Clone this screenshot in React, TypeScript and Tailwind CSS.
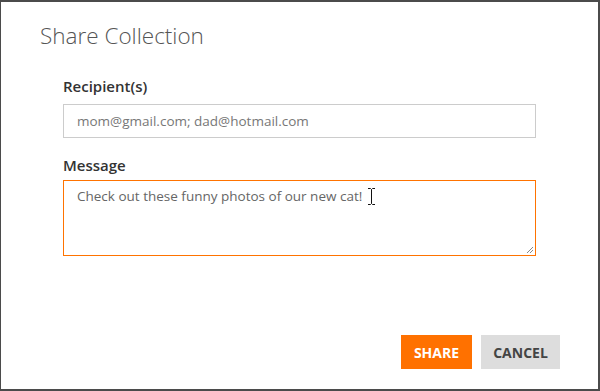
import React from "react";

const App = () => {
  return (
    <div className="h-[391px] w-[600px] overflow-hidden bg-[#3a3a3a] font-['Open_Sans',sans-serif]">
      <div className="flex h-full w-full flex-col border-t-2 border-r-2 border-b-2 border-l border-[#4b4b4b] bg-white">
        <h2 className="pl-[39px] pt-[19px] text-[22.5px] font-light leading-[30px] text-[#555]">
          Share Collection
        </h2>
        <div className="flex flex-col px-[62px] pt-[23px]">
          <label className="text-[15px] font-semibold leading-[24px] text-[#333]">
            Recipient(s)
          </label>
          <div className="mt-[6px] flex h-[34px] items-center border border-[#cccccc] px-[13px] text-[13.5px] text-[#777]">
            mom@gmail.com; dad@hotmail.com
          </div>
          <label className="mt-[15px] text-[15px] font-semibold leading-[24px] text-[#333]">
            Message
          </label>
          <div className="relative mt-[3px] h-[76px] border border-[#ff7300] px-[13px] pt-[5px] text-[13.5px] text-[#666]">
            <span>Check out these funny photos of our new cat!</span>
            <svg
              className="absolute left-[303px] top-[7px]"
              width="9"
              height="17"
              viewBox="0 0 9 17"
            >
              <path
                d="M1 0.5H3.5L4.5 1.5L5.5 0.5H8M4.5 1.5V15.5M1 16.5H3.5L4.5 15.5L5.5 16.5H8"
                stroke="#111"
                strokeWidth="1"
                fill="none"
              />
            </svg>
            <svg
              className="absolute bottom-[1px] right-[1px]"
              width="8"
              height="8"
              viewBox="0 0 8 8"
            >
              <path d="M7 1L1 7M7 4L4 7" stroke="#888" strokeWidth="1" />
            </svg>
          </div>
        </div>
        <div className="mt-auto flex justify-end gap-[9px] pb-[20px] pr-[38px]">
          <button className="h-[34px] w-[71px] bg-[#ff7100] text-[14px] font-bold text-white">
            SHARE
          </button>
          <button className="h-[34px] w-[79px] bg-[#dddddd] text-[14px] font-bold text-[#444]">
            CANCEL
          </button>
        </div>
      </div>
    </div>
  );
};

export default App;
